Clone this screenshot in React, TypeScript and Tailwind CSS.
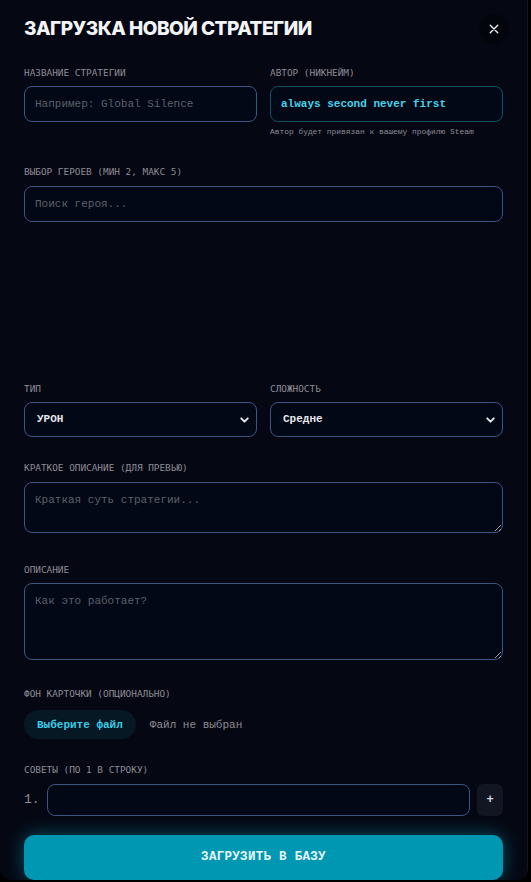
import React from 'react';

// ─── Upload strategy modal ──────────────────────────────────────────

const mono = { fontFamily: '"Liberation Mono", "DejaVu Sans Mono", monospace' };

function Label({ children }: { children: React.ReactNode }) {
    return (
        <div
            className="mb-[9px] text-[9.4px] uppercase leading-none text-[#8e8c94]"
            style={{ fontFamily: '"DejaVu Sans Mono", "Liberation Mono", monospace' }}
        >
            {children}
        </div>
    );
}

function Chevron() {
    return (
        <svg viewBox="0 0 20 20" className="pointer-events-none absolute right-[6px] top-1/2 h-[13px] w-[13px] -translate-y-1/2" fill="none">
            <path d="M5 7.5l5 5 5-5" stroke="#e5e7eb" strokeWidth="3" strokeLinecap="round" strokeLinejoin="round" />
        </svg>
    );
}

export default function App() {
    const field =
        'w-full rounded-lg border border-[#3a5784] bg-[#030817] px-[10px] text-[11px] text-[#d1d5db] placeholder:text-[#5e6068] outline-none';
    const select =
        'h-[35px] w-full appearance-none rounded-lg border border-[#3a5784] bg-[#030817] px-[12px] text-[11px] font-bold text-[#e5e7eb] outline-none';

    return (
        <div className="min-h-[882px] w-[531px] bg-black" style={mono}>
            <div className="h-[880px] w-[528px] overflow-hidden rounded-b-xl border-r border-[#14161d] bg-[#050813] px-6">
                {/* header */}
                <div className="flex h-[56px] items-center justify-between pt-[2px]">
                    <h2
                        className="text-[19px] font-extrabold uppercase tracking-[-0.5px] text-[#f3f4f6]"
                        style={{ fontFamily: 'Inter, "Liberation Sans", sans-serif' }}
                    >
                        Загрузка новой стратегии
                    </h2>
                    <button className="-mr-[6px] flex h-[30px] w-[30px] items-center justify-center rounded-full bg-[#03050c]">
                        <svg viewBox="0 0 16 16" className="h-[12px] w-[12px]" fill="none">
                            <path d="M3 3l10 10M13 3L3 13" stroke="#f3f4f6" strokeWidth="1.8" strokeLinecap="round" />
                        </svg>
                    </button>
                </div>

                {/* name / author */}
                <div className="mt-[12px] grid grid-cols-2 gap-[13px]">
                    <div>
                        <Label>Название стратегии</Label>
                        <input className={`${field} h-[36px]`} placeholder="Например: Global Silence" style={mono} />
                    </div>
                    <div>
                        <Label>Автор (никнейм)</Label>
                        <input
                            className="h-[36px] w-full rounded-lg border border-[#0f5266] bg-[#030817] px-[10px] text-[11px] font-bold text-[#47d3ea] outline-none"
                            defaultValue="always second never first"
                            readOnly
                            style={mono}
                        />
                        <div className="mt-[6px] text-[7.9px] leading-none text-[#8b8b92]">
                            Автор будет привязан к вашему профилю Steam
                        </div>
                    </div>
                </div>

                {/* heroes */}
                <div className="mt-[31px]">
                    <Label>Выбор героев (мин 2, макс 5)</Label>
                    <input className={`${field} h-[36px]`} placeholder="Поиск героя..." style={mono} />
                    <div className="h-[158px]" />
                </div>

                {/* type / difficulty */}
                <div className="mt-[4px] grid grid-cols-2 gap-[13px]">
                    <div>
                        <Label>Тип</Label>
                        <div className="relative">
                            <select className={select} style={mono} defaultValue="УРОН">
                                <option>УРОН</option>
                            </select>
                            <Chevron />
                        </div>
                    </div>
                    <div>
                        <Label>Сложность</Label>
                        <div className="relative">
                            <select className={select} style={mono} defaultValue="Средне">
                                <option>Средне</option>
                            </select>
                            <Chevron />
                        </div>
                    </div>
                </div>

                {/* short description */}
                <div className="mt-[26px]">
                    <Label>Краткое описание (для превью)</Label>
                    <textarea className={`${field} block h-[51px] py-[9px]`} placeholder="Краткая суть стратегии..." style={mono} />
                </div>

                {/* description */}
                <div className="mt-[32px]">
                    <Label>Описание</Label>
                    <textarea className={`${field} block h-[77px] py-[9px]`} placeholder="Как это работает?" style={mono} />
                </div>

                {/* background */}
                <div className="mt-[29px]">
                    <Label>Фон карточки (опционально)</Label>
                    <div className="mt-[12px] flex items-center gap-[14px]">
                        <button className="h-[29px] rounded-full bg-[#061824] px-[13px] text-[11px] font-bold text-[#39cde6]" style={mono}>
                            Выберите файл
                        </button>
                        <span className="text-[11px] text-[#8e8c94]">Файл не выбран</span>
                    </div>
                </div>

                {/* tips */}
                <div className="mt-[26px]">
                    <Label>Советы (по 1 в строку)</Label>
                    <div className="mt-[9px] flex items-center gap-[7px]">
                        <span className="text-[13px] text-[#8e8c94]">1.</span>
                        <input className={`${field} h-[32px] flex-1`} style={mono} />
                        <button className="flex h-[32px] w-[26px] items-center justify-center rounded-md bg-[#111622] text-[12px] font-bold text-[#d1d5db]">
                            +
                        </button>
                    </div>
                </div>

                {/* submit */}
                <button
                    className="mt-[19px] h-[45px] w-full rounded-[10px] bg-[#0097b2] text-[12.5px] font-bold tracking-[0.3px] text-[#e8f6f9] shadow-[0_0_18px_rgba(8,170,200,0.45)]"
                    style={mono}
                >
                    ЗАГРУЗИТЬ В БАЗУ
                </button>
            </div>
        </div>
    );
}
